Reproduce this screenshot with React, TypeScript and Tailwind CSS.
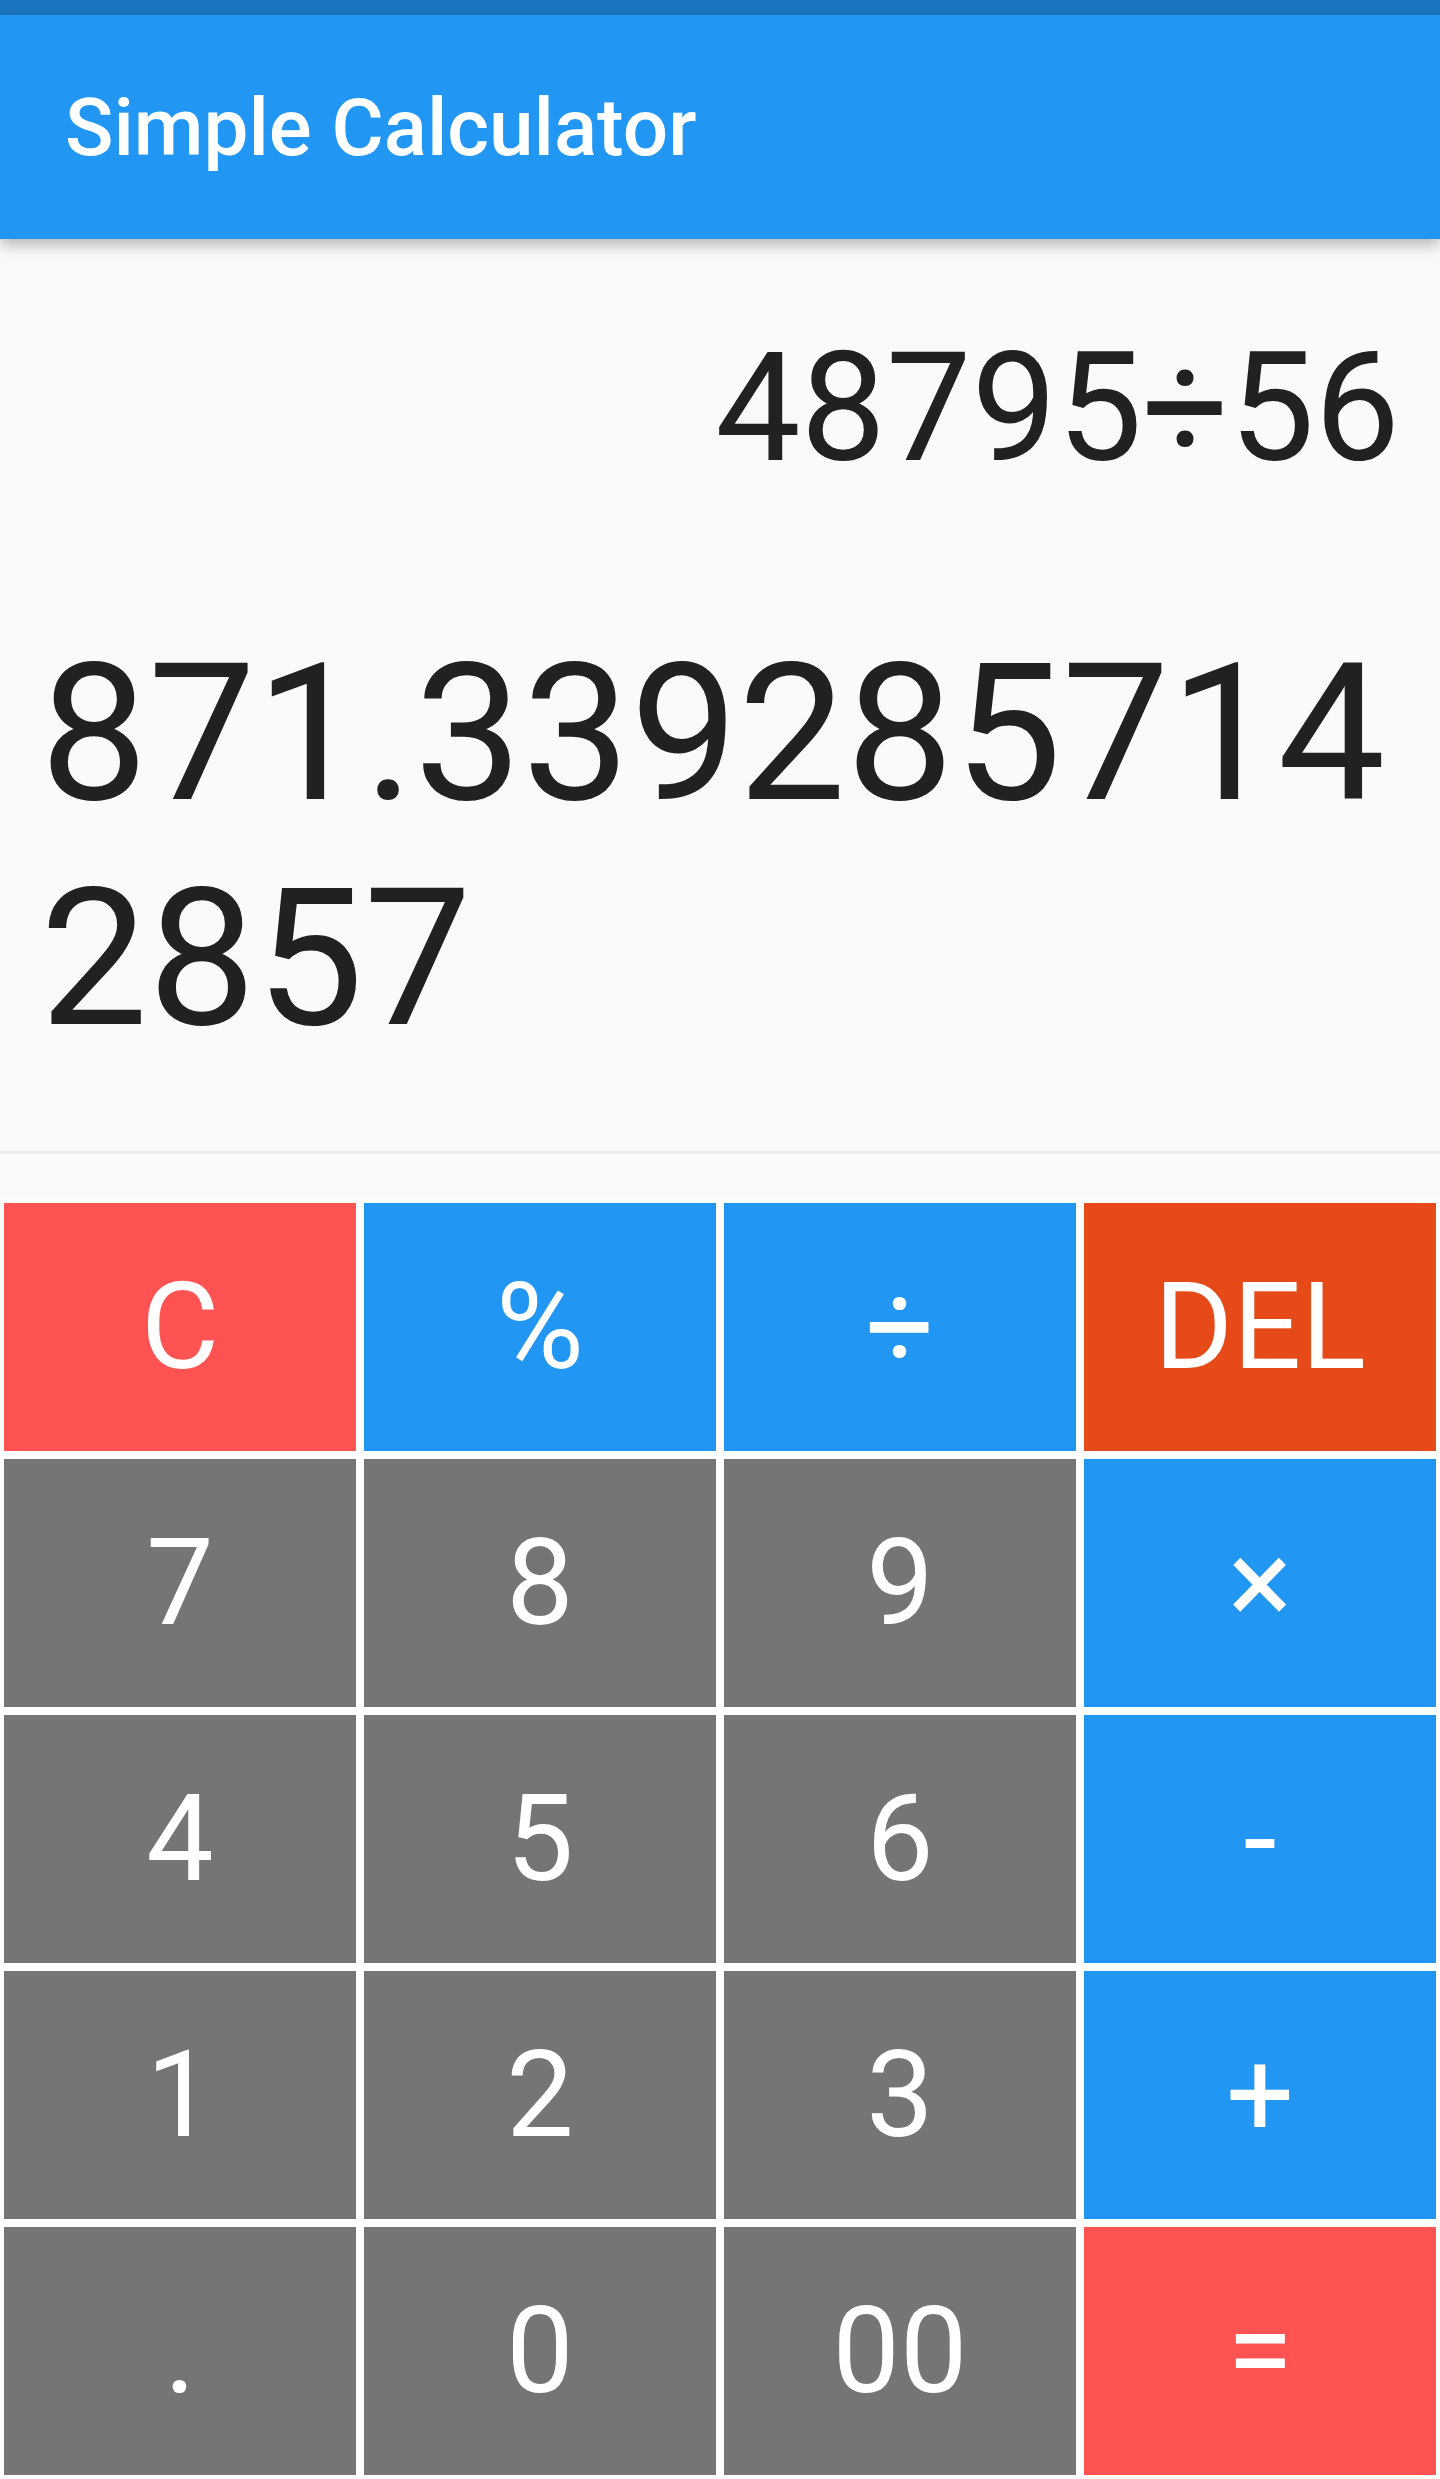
const keys = [
  { label: "C", bg: "bg-[#ff5252]" },
  { label: "%", bg: "bg-[#2196f3]" },
  { label: "÷", bg: "bg-[#2196f3]" },
  { label: "DEL", bg: "bg-[#e64a19]" },
  { label: "7", bg: "bg-[#757575]" },
  { label: "8", bg: "bg-[#757575]" },
  { label: "9", bg: "bg-[#757575]" },
  { label: "×", bg: "bg-[#2196f3]" },
  { label: "4", bg: "bg-[#757575]" },
  { label: "5", bg: "bg-[#757575]" },
  { label: "6", bg: "bg-[#757575]" },
  { label: "-", bg: "bg-[#2196f3]" },
  { label: "1", bg: "bg-[#757575]" },
  { label: "2", bg: "bg-[#757575]" },
  { label: "3", bg: "bg-[#757575]" },
  { label: "+", bg: "bg-[#2196f3]" },
  { label: ".", bg: "bg-[#757575]" },
  { label: "0", bg: "bg-[#757575]" },
  { label: "00", bg: "bg-[#757575]" },
  { label: "=", bg: "bg-[#ff5252]" },
];

const CalcButton = ({ label, bg }: { label: string; bg: string }) => {
  return (
    <button
      className={`h-[256px] border-4 border-white ${bg} flex items-center justify-center text-white text-[120px] leading-[1.172] font-normal`}
    >
      {label}
    </button>
  );
};

export default function App() {
  const expression = "48795÷56";
  const result = "871.3392857142857";

  return (
    <div className="w-full h-[2479px] flex flex-col bg-[#fafafa] overflow-hidden" style={{ fontFamily: "Roboto, 'Noto Sans', sans-serif" }}>
      <div className="h-[15px] bg-[#1a76c0] shrink-0" />
      <header className="relative z-10 h-[224px] shrink-0 bg-[#2196f3] flex items-center pl-[65px] pt-[4px] shadow-[0_6px_14px_rgba(0,0,0,0.28)]">
        <h1 className="text-white text-[80px] font-medium leading-[1.172]">Simple Calculator</h1>
      </header>

      <main className="flex-1 flex flex-col">
        <div className="px-[40px] pt-[80px] text-right text-[#212121] text-[152px] leading-[1.172]">{expression}</div>
        <div className="px-[40px] pt-[124px] text-left text-[#212121] text-[192px] leading-[1.172] break-all">{result}</div>
        <div className="flex-1" />
        <div className="h-[3px] bg-[#ececec] mb-[45px]" />
      </main>

      <div className="grid grid-cols-4 shrink-0">
        {keys.map((k) => (
          <CalcButton key={k.label} label={k.label} bg={k.bg} />
        ))}
      </div>
    </div>
  );
}
